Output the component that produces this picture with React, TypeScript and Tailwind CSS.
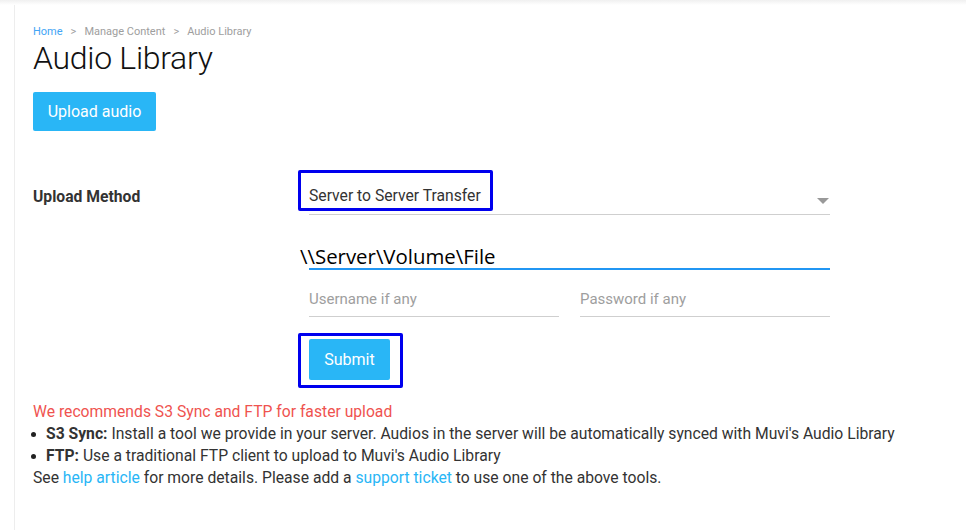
import React from 'react';

const Bullet: React.FC<{ title: string; children: React.ReactNode }> = ({ title, children }) => (
  <div className="flex h-[22px] items-center">
    <span className="ml-[-2px] mr-[10px] h-[5px] w-[5px] rounded-full bg-[#222]" />
    <span>
      <b className="font-bold">{title}</b> {children}
    </span>
  </div>
);

const App: React.FC = () => {
  return (
    <div className="min-h-screen w-[966px] h-[530px] overflow-hidden bg-white font-['Roboto','Liberation_Sans',sans-serif] text-[#333]">
      {/* top shadow band */}
      <div className="h-[5px] bg-gradient-to-b from-[#f0f0f0] to-white" />

      <div className="ml-[14px] h-[525px] border-l border-[#ededed] pl-[18px] pt-[20px]">
        {/* Breadcrumb */}
        <div className="flex h-[13px] items-center text-[11px] leading-[13px] text-[#9e9e9e]">
          <span className="text-[#42a5f5]">Home</span>
          <span className="mx-[8px]">&gt;</span>
          <span>Manage Content</span>
          <span className="mx-[8px]">&gt;</span>
          <span>Audio Library</span>
        </div>

        <h1 className="h-[40px] text-[32px] font-light leading-[40px] tracking-[-0.3px] text-[#111]">Audio Library</h1>

        <button className="mt-[14px] h-[39px] w-[123px] rounded-[2px] bg-[#29b6f6] text-[16px] text-white">
          Upload audio
        </button>

        {/* Form */}
        <div className="mt-[44px] flex">
          <div className="flex h-[40px] w-[276px] items-center pt-[3px] text-[15.7px] font-bold text-[#333]">Upload Method</div>
          <div className="w-[521px]">
            <div className="relative flex h-[40px] items-center justify-between border-b border-[#cfcfcf] pt-[3px]">
              <span className="text-[15.7px] text-[#333]">Server to Server Transfer</span>
              <span className="mr-[1px] mt-[10px] h-0 w-0 border-x-[6px] border-t-[6px] border-x-transparent border-t-[#999]" />
              <div className="pointer-events-none absolute left-[-11px] top-[-5px] h-[41px] w-[195px] rounded-[2px] border-[3px] border-[#0000ee]" />
            </div>

            <div className="mt-[19px] flex h-[36px] items-end border-b-2 border-[#2196f3]">
              <span className="-ml-[9px] font-['Open_Sans','DejaVu_Sans',sans-serif] text-[20.4px] leading-[24px] text-black">
                \\Server\Volume\File
              </span>
            </div>

            <div className="mt-[12px] flex gap-[21px]">
              <div className="flex h-[35px] w-[250px] items-center border-b border-[#cfcfcf] text-[15px] text-[#9e9e9e]">
                Username if any
              </div>
              <div className="flex h-[35px] w-[250px] items-center border-b border-[#cfcfcf] text-[15px] text-[#9e9e9e]">
                Password if any
              </div>
            </div>

            <div className="relative mt-[22px] h-[41px] w-[81px]">
              <button className="h-[41px] w-[81px] rounded-[2px] bg-[#29b6f6] text-[16px] text-white">Submit</button>
              <div className="pointer-events-none absolute left-[-11px] top-[-6px] h-[55px] w-[105px] rounded-[2px] border-[3px] border-[#0000ee]" />
            </div>
          </div>
        </div>

        {/* Notes */}
        <div className="mt-[21px] text-[15.7px] leading-[22px]">
          <div className="text-[#ef5350]">We recommends S3 Sync and FTP for faster upload</div>
          <Bullet title="S3 Sync:">
            Install a tool we provide in your server. Audios in the server will be automatically synced with Muvi's Audio Library
          </Bullet>
          <Bullet title="FTP:">Use a traditional FTP client to upload to Muvi's Audio Library</Bullet>
          <div>
            See <a className="text-[#29b6f6]">help article</a> for more details. Please add a{' '}
            <a className="text-[#29b6f6]">support ticket</a> to use one of the above tools.
          </div>
        </div>
      </div>
    </div>
  );
};

export default App;
